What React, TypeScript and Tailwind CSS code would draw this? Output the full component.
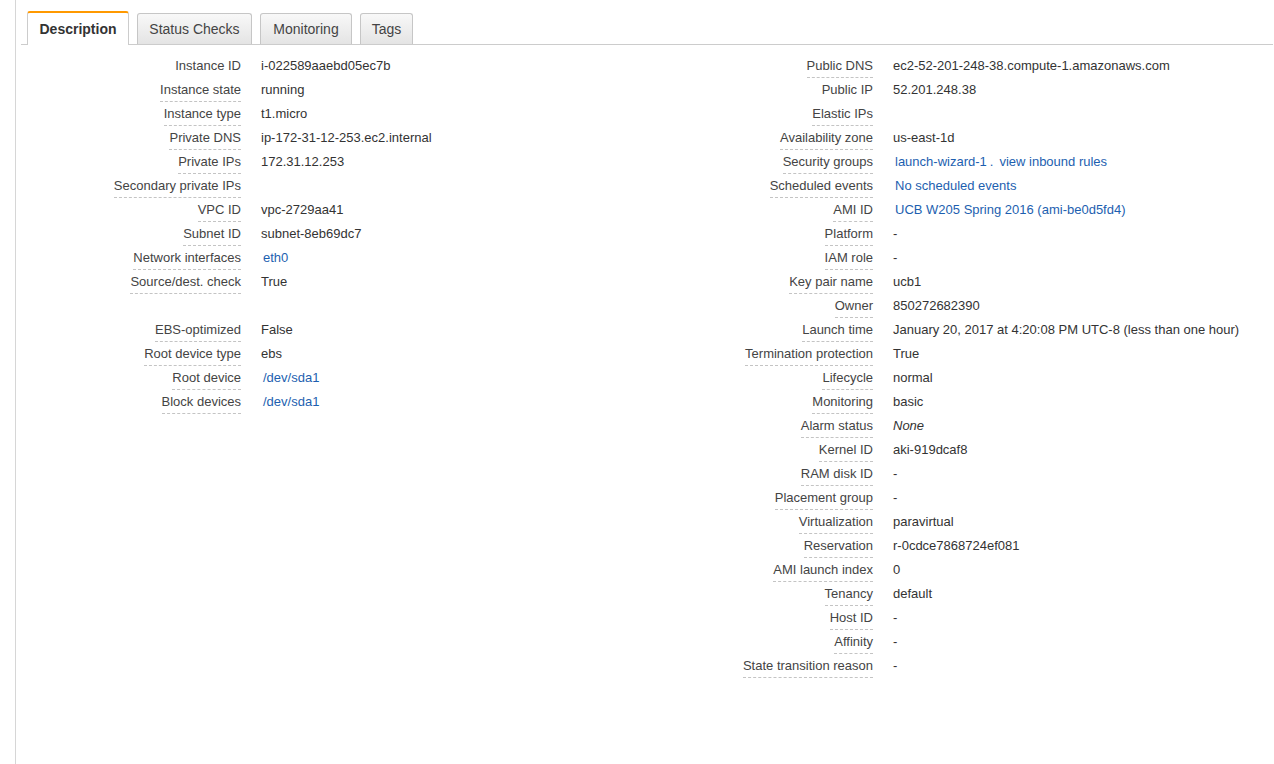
import React from "react";

type Row = { label: string; value?: React.ReactNode; link?: boolean; plain?: boolean; italic?: boolean; spacer?: boolean };

const left: Row[] = [
  { label: "Instance ID", value: "i-022589aaebd05ec7b", plain: true },
  { label: "Instance state", value: "running" },
  { label: "Instance type", value: "t1.micro" },
  { label: "Private DNS", value: "ip-172-31-12-253.ec2.internal" },
  { label: "Private IPs", value: "172.31.12.253" },
  { label: "Secondary private IPs", value: "" },
  { label: "VPC ID", value: "vpc-2729aa41" },
  { label: "Subnet ID", value: "subnet-8eb69dc7" },
  { label: "Network interfaces", value: "eth0", link: true },
  { label: "Source/dest. check", value: "True" },
  { label: "", spacer: true },
  { label: "EBS-optimized", value: "False" },
  { label: "Root device type", value: "ebs" },
  { label: "Root device", value: "/dev/sda1", link: true },
  { label: "Block devices", value: "/dev/sda1", link: true },
];

const right: Row[] = [
  { label: "Public DNS", value: "ec2-52-201-248-38.compute-1.amazonaws.com" },
  { label: "Public IP", value: "52.201.248.38", plain: true },
  { label: "Elastic IPs", value: "" },
  { label: "Availability zone", value: "us-east-1d" },
  {
    label: "Security groups",
    value: (
      <span>
        <span>launch-wizard-1</span>
        <span className="ml-[3px]">.</span>
        <span className="ml-[6px]">view inbound rules</span>
      </span>
    ),
    link: true,
  },
  { label: "Scheduled events", value: "No scheduled events", link: true },
  { label: "AMI ID", value: "UCB W205 Spring 2016 (ami-be0d5fd4)", link: true },
  { label: "Platform", value: "-" },
  { label: "IAM role", value: "-" },
  { label: "Key pair name", value: "ucb1" },
  { label: "Owner", value: "850272682390" },
  { label: "Launch time", value: "January 20, 2017 at 4:20:08 PM UTC-8 (less than one hour)" },
  { label: "Termination protection", value: "True" },
  { label: "Lifecycle", value: "normal" },
  { label: "Monitoring", value: "basic" },
  { label: "Alarm status", value: "None", italic: true },
  { label: "Kernel ID", value: "aki-919dcaf8" },
  { label: "RAM disk ID", value: "-" },
  { label: "Placement group", value: "-" },
  { label: "Virtualization", value: "paravirtual" },
  { label: "Reservation", value: "r-0cdce7868724ef081" },
  { label: "AMI launch index", value: "0" },
  { label: "Tenancy", value: "default" },
  { label: "Host ID", value: "-" },
  { label: "Affinity", value: "-" },
  { label: "State transition reason", value: "-" },
];

function Rows({ rows, labelW }: { rows: Row[]; labelW: string }) {
  return (
    <div className="flex flex-col">
      {rows.map((r, i) =>
        r.spacer ? (
          <div key={i} className="h-[24px]" />
        ) : (
          <div key={i} className="flex h-[24px] items-start leading-[16px]">
            <div className={`${labelW} shrink-0 text-right leading-[16px]`}>
              <span
                className={`inline-block align-top leading-[16px] pb-[3px] text-[#444] ${
                  r.plain ? "border-b border-transparent" : "border-b border-dashed border-[#c4c4c4]"
                }`}
              >
                {r.label}
              </span>
            </div>
            <div
              className={`leading-[16px] whitespace-nowrap ${
                r.link ? "ml-[22px] text-[#1d5fb0]" : "ml-[20px] text-[#333]"
              } ${r.italic ? "italic" : ""}`}
            >
              {r.value}
            </div>
          </div>
        )
      )}
    </div>
  );
}

export default function App() {
  const font = { fontFamily: '"Liberation Sans", Arial, Helvetica, sans-serif' };
  return (
    <div className="flex h-[764px] w-[1274px] bg-white text-[13px]" style={font}>
      <div className="w-[15px] shrink-0" />
      <div className="w-px shrink-0 bg-[#d6d6d6]" />
      <div className="flex flex-1 flex-col pl-[5px] pt-[11px] pr-[1px]">
        <div className="flex items-end gap-[8px] border-b border-[#cccccc] pl-[6px] h-[34px]">
          <div className="-mb-px flex h-[34px] w-[102px] items-center justify-center rounded-t-[3px] border-x border-t-[2px] border-x-[#cccccc] border-t-[#f90] bg-white text-[14px] font-bold text-[#333]">
            Description
          </div>
          <div className="flex h-[31px] w-[115px] items-center justify-center rounded-t-[3px] border-x border-t border-[#c6c6c6] bg-gradient-to-b from-[#f8f8f8] to-[#e4e4e4] text-[14px] text-[#444]">
            Status Checks
          </div>
          <div className="flex h-[31px] w-[92px] items-center justify-center rounded-t-[3px] border-x border-t border-[#c6c6c6] bg-gradient-to-b from-[#f8f8f8] to-[#e4e4e4] text-[14px] text-[#444]">
            Monitoring
          </div>
          <div className="flex h-[31px] w-[53px] items-center justify-center rounded-t-[3px] border-x border-t border-[#c6c6c6] bg-gradient-to-b from-[#f8f8f8] to-[#e4e4e4] text-[14px] text-[#444]">
            Tags
          </div>
        </div>
        <div className="grid grid-cols-[632px_1fr] pt-[13px]">
          <Rows rows={left} labelW="w-[220px]" />
          <Rows rows={right} labelW="w-[220px]" />
        </div>
      </div>
    </div>
  );
}
